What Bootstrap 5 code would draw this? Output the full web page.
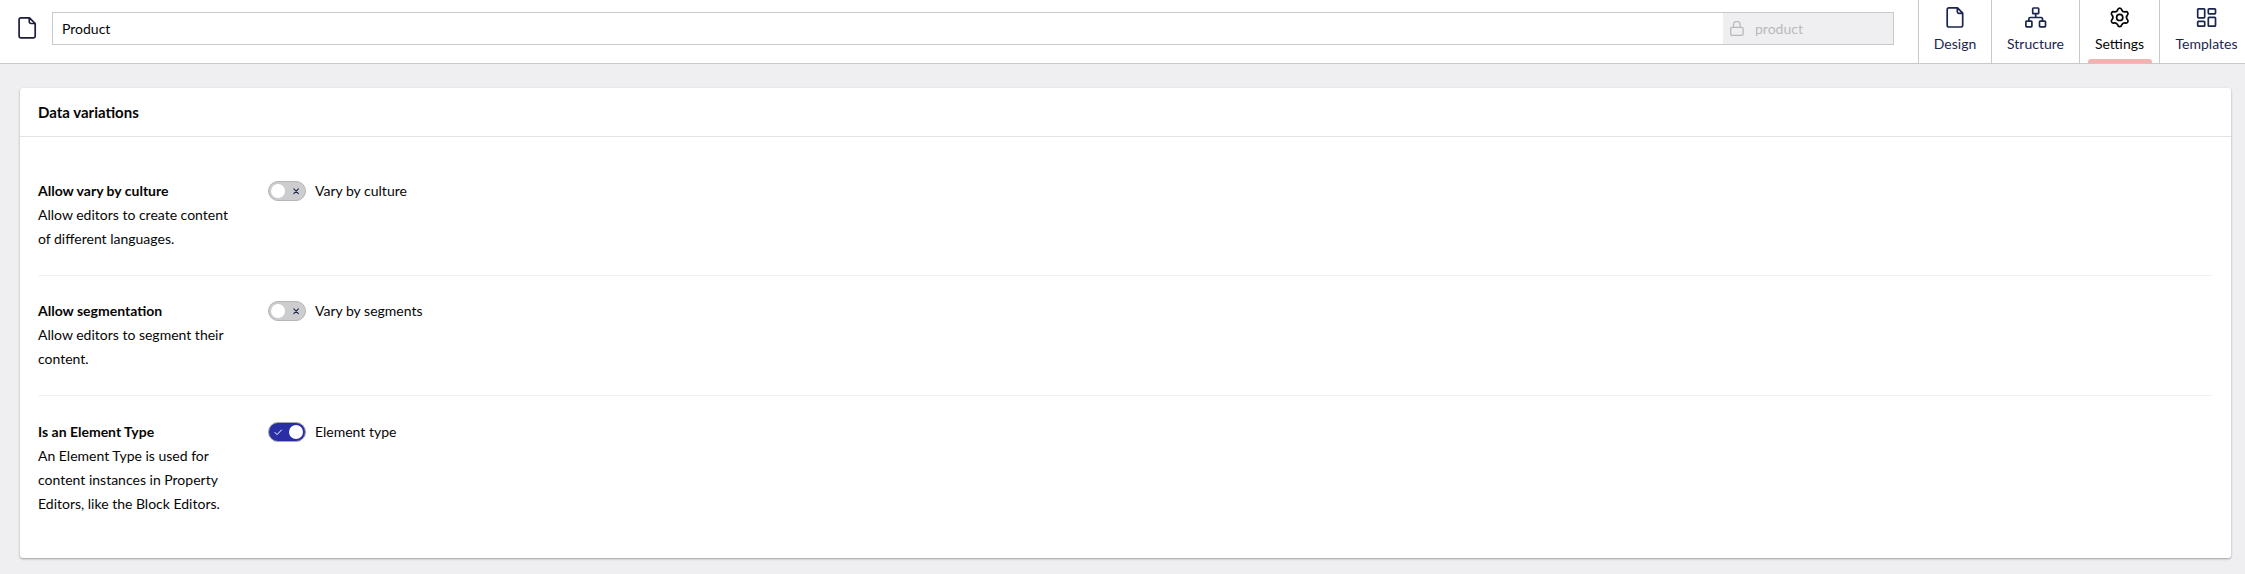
<!DOCTYPE html>
<html lang="en">
<head>
<meta charset="utf-8">
<title>Product</title>
<link href="https://cdn.jsdelivr.net/npm/bootstrap@5.3.0/dist/css/bootstrap.min.css" rel="stylesheet">
<style>
body{font-family:Lato,sans-serif;font-size:14px;line-height:24px;color:#060606;background:#efeff1;height:574px;overflow:hidden}
svg{fill:none;stroke:currentColor;stroke-linecap:round;stroke-linejoin:round;display:block;flex:none}
.editor-head{height:64px;border-bottom:1px solid #c9c9cb;padding-left:17px}
.doc-icon{width:35px;margin-top:16px;color:#1b1d3a}
.name-box{height:33px;margin-top:12px;border:1px solid #c9c9cb}
.name-text{padding-left:9px;line-height:32px}
.alias-box{width:170px;background:#efeff1;color:#b9b9bb;line-height:32px}
.alias-box svg{margin:8px 11px 0 7px}
.tabs-row{margin-left:24px}
.tab-item{border-left:1px solid #c9c9cb;height:63px;padding-top:5px;color:#1b264f;line-height:20px}
.tab-item svg{margin-bottom:5px}
.tab-design{width:73px}
.tab-structure{width:88px}
.tab-settings{width:80px}
.tab-templates{width:86px;padding-left:8px}
.tab-item.active{color:#060606}
.tab-item.active::after{content:"";position:absolute;left:8px;right:7px;bottom:0;height:4px;background:#f5b1ae;border-radius:3px 3px 0 0}
.box{margin:24px 14px 0 20px;height:470px;border:0;border-radius:3px;box-shadow:0 1px 3px rgba(0,0,0,.12),0 1px 2px rgba(0,0,0,.24)}
.box-title{height:49px;line-height:49px;padding:0 18px;border-bottom:1px solid #e3e3e5;font-size:15px}
.box-body{padding:18px 20px 18px 18px}
.prop{padding:24px 0;border-bottom:1px solid #f1f1f3}
.prop:last-child{border-bottom:0}
.prop:nth-child(2){padding-top:23px}
.prop-label{width:200px;margin-right:30px}
.toggle{width:38px;height:20px;border-radius:10px;border:1px solid #b5b5b8;background:#cdcdd0;margin:2px 9px 0 0;padding:2px;color:#1b264f}
.knob{width:14px;height:14px;border-radius:50%;background:#fff}
.toggle.on{background:#2a2ea5;border-color:#a6a6ac;color:#fff;flex-direction:row-reverse}
</style>
</head>
<body>
<header class="editor-head bg-white d-flex">
  <div class="doc-icon">
    <svg width="20" height="24" viewBox="0 0 20 24" stroke-width="1.7"><path d="M3.700 1.800H12.500L18.200 7.500V20.300a1.600 1.600 0 0 1-1.600 1.600H3.700a1.600 1.600 0 0 1-1.600-1.600V3.400a1.600 1.600 0 0 1 1.600-1.600ZM12.300 2V5.800a1.700 1.700 0 0 0 1.700 1.700H18"/></svg>
  </div>
  <div class="name-box d-flex flex-grow-1">
    <div class="name-text flex-grow-1">Product</div>
    <div class="alias-box d-flex">
      <svg width="14" height="16" viewBox="0 0 14 16" stroke-width="1.3"><rect x=".7" y="6.400" width="12.400" height="7.900" rx="1.200"/><path d="M3.500 6.200V3.700a3.300 3.300 0 0 1 6.600 0v2.500"/></svg>
      <span>product</span>
    </div>
  </div>
  <nav class="tabs-row d-flex">
    <div class="tab-item tab-design d-flex flex-column align-items-center">
      <svg width="24" height="24" viewBox="0 0 24 24" stroke-width="1.700"><path d="M5.800 2.900H14.500l5.200 5.200v12.300a1.600 1.600 0 0 1-1.600 1.600H5.800a1.600 1.600 0 0 1-1.600-1.600V4.500a1.600 1.600 0 0 1 1.600-1.600ZM14.300 3.100v3.600a1.600 1.600 0 0 0 1.600 1.600h3.600"/></svg>Design</div>
    <div class="tab-item tab-structure d-flex flex-column align-items-center">
      <svg width="24" height="24" viewBox="0 0 24 24" stroke-width="1.700"><rect x="8.700" y="3" width="6" height="5.600" rx=".7"/><rect x="1.900" y="16.200" width="6" height="5.600" rx=".7"/><rect x="15.500" y="16.200" width="6" height="5.600" rx=".7"/><path d="M11.700 8.800v3.700M4.900 16v-2.200a1.300 1.300 0 0 1 1.300-1.300h11a1.300 1.300 0 0 1 1.300 1.300V16"/></svg>Structure</div>
    <div class="tab-item tab-settings active position-relative d-flex flex-column align-items-center">
      <svg width="24" height="24" viewBox="-12 -12 24 24" stroke-width="1.700"><g transform="translate(-.3 .4)"><path d="M-2-7.500C-1.600-9.900 1.600-9.900 2-7.500Q2.950-5.100 5.500-5.500C7.770-6.340 9.370-3.560 7.500-2Q5.900 0 7.500 2C9.370 3.560 7.770 6.340 5.500 5.500Q2.950 5.100 2 7.500C1.600 9.900-1.600 9.900-2 7.500Q-2.950 5.100-5.500 5.500C-7.770 6.340-9.370 3.560-7.500 2Q-5.900 0-7.500-2C-9.370-3.560-7.770-6.340-5.500-5.500Q-2.950-5.100-2-7.500Z"/><circle r="3.100"/></g></svg>Settings</div>
    <div class="tab-item tab-templates d-flex flex-column align-items-center">
      <svg width="24" height="24" viewBox="0 0 24 24" stroke-width="1.700"><rect x="2.700" y="3.800" width="7" height="9" rx=".7"/><rect x="13.300" y="3.800" width="7.200" height="5" rx=".7"/><rect x="2.700" y="16.400" width="7" height="4.800" rx=".7"/><rect x="13.300" y="12.400" width="7.200" height="8.800" rx=".7"/></svg>Templates</div>
  </nav>
</header>

<main class="box card">
  <div class="box-title fw-bold">Data variations</div>
  <div class="box-body">
    <div class="prop d-flex">
      <div class="prop-label"><div class="fw-bold">Allow vary by culture</div>Allow editors to create content of different languages.</div>
      <div class="toggle d-flex align-items-center justify-content-between"><span class="knob"></span><svg width="14" height="12" viewBox="0 0 14 12" stroke-width="1.100"><path d="M4.800 3.800 9.400 8.600M9.400 3.800 4.800 8.600"/></svg></div>
      <div>Vary by culture</div>
    </div>
    <div class="prop d-flex">
      <div class="prop-label"><div class="fw-bold">Allow segmentation</div>Allow editors to segment their content.</div>
      <div class="toggle d-flex align-items-center justify-content-between"><span class="knob"></span><svg width="14" height="12" viewBox="0 0 14 12" stroke-width="1.100"><path d="M4.800 3.800 9.400 8.600M9.400 3.800 4.800 8.600"/></svg></div>
      <div>Vary by segments</div>
    </div>
    <div class="prop d-flex">
      <div class="prop-label"><div class="fw-bold">Is an Element Type</div>An Element Type is used for content instances in Property Editors, like the Block Editors.</div>
      <div class="toggle on d-flex align-items-center justify-content-between"><span class="knob"></span><svg width="14" height="12" viewBox="0 0 14 12" stroke-width="1"><path d="M4 6.500 6 8.600 10.500 4"/></svg></div>
      <div>Element type</div>
    </div>
  </div>
</main>
<script src="https://cdn.jsdelivr.net/npm/bootstrap@5.3.0/dist/js/bootstrap.bundle.min.js"></script>
</body>
</html>
